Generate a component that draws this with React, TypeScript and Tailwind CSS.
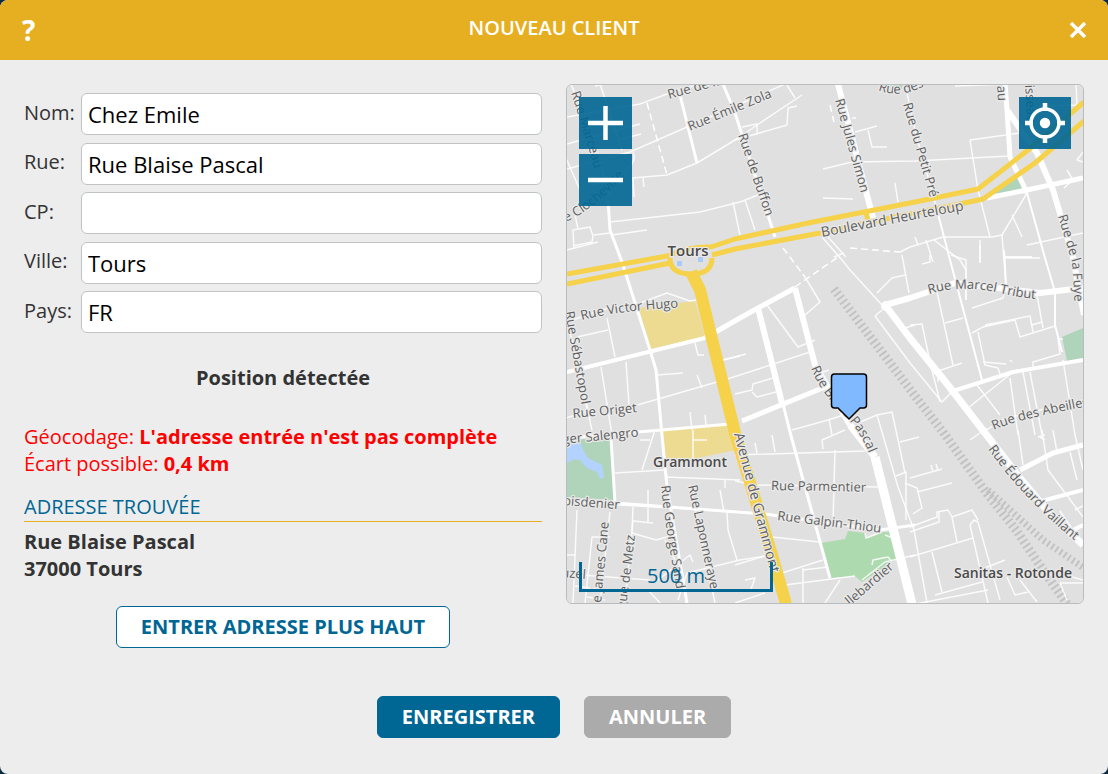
import { useState } from "react";

const fields = [
  { id: "nom", label: "Nom:", value: "Chez Emile" },
  { id: "rue", label: "Rue:", value: "Rue Blaise Pascal" },
  { id: "cp", label: "CP:", value: "" },
  { id: "ville", label: "Ville:", value: "Tours" },
  { id: "pays", label: "Pays:", value: "FR" },
];

const lanes = [
  "M567 169L630 152L687 127L740 104L785 84",
  "M567 117L640 104L667 94L700 84",
  "M571 84L590 130L610 195",
  "M600 84L622 150",
  "M567 144L640 124M590 186L622 176M618 140L641 134",
  "M595 86L625 80M566 158L580 190",
  "M633 152Q637 160 628 168L622 182M632 178L667 175L697 163L740 137L757 125L802 95",
  "M633 178L634 197M643 178L644 187",
  "M610 222L700 212L740 202L758 195M733 202L740 235M745 200L755 230",
  "M567 250L598 242M574 249L573 230L590 227L593 236L592 242L573 246M594 235L610 233M612 235L647 230M575 215L578 229",
  "M735 140L787 125L788 108L797 106M742 127L757 124L757 135M787 85L795 98",
  "M855 132L877 126M868 130L872 147L887 147M852 118L856 118",
  "M823 169L852 162L915 161L1010 156M823 198L853 199M895 183L898 202",
  "M970 140L1020 133M970 140L978 190L990 237M955 86L1010 84M1040 106L1077 105L1076 84",
  "M1027 193L1002 235L992 237L943 237L910 247L900 252M1002 235L1006 285M1027 245L1083 233M1012 215L1022 237M1005 258L1040 258M1067 170L1073 180L1064 188M1083 162L1077 160L1083 152",
  "M915 237L918 245M926 240L933 262M934 240L960 260L966 270L966 300",
  "M980 240L980 262M1005 257L1032 257M930 255L930 262L922 264",
  "M822 237L842 260L850 270L882 305M828 237L846 257M834 257L844 253",
  "M877 293L892 278L905 275M902 255L909 293",
  "M875 316L910 363L942 402L952 392M875 316L882 310M905 328L915 325",
  "M805 277L820 302L805 315M767 305L798 347L815 340M820 373L829 370",
  "M620 410L717 382L740 375L810 352M735 394L752 390L753 384L773 378M752 392L757 397L776 392M723 360L746 354",
  "M792 430L828 420L850 413M829 419L832 435M858 423L877 415L892 412L897 435L905 473M877 415L898 487L914 530L927 603",
  "M735 455L865 451M823 449L822 440L845 430M835 450L833 523M757 453L755 443M775 452L772 435",
  "M735 481L755 485L878 487M665 477L740 480M615 473L665 470M642 470L655 430M640 440L650 440M725 480L725 488",
  "M772 537L820 542M782 573L823 560M803 568L803 603M803 570L828 567M825 603L840 580M785 585L855 576M735 565L765 556",
  "M862 580L885 562L915 555M872 565L873 560L888 557L892 562M865 533L866 538L882 532",
  "M567 502L740 512L765 514M648 490L648 523M633 507L632 533L656 540L670 536M633 521L653 523M665 540L675 560",
  "M577 510L573 603M567 555L575 555M610 537L592 537L585 603M687 573L740 560L765 556M687 573L678 600M658 580L690 555L693 562M727 512L728 530L737 560M720 490L724 512",
  "M567 574L650 580M575 586L590 588M587 597L605 600M735 603L765 593M745 580L755 578L750 592",
  "M898 540L885 535M910 527L937 517L937 512L948 510L952 517L972 510L978 520M910 532L939 522L939 512M952 517L957 542M970 525L988 603M978 522L1000 600M970 525L974 520L978 522M910 557L973 538M932 552L942 592M935 595L982 582M910 605L988 590M980 570L1005 560",
  "M917 492L952 483M905 483L917 488L922 508L913 514M910 478L942 469M931 465L933 472M936 464L938 471M900 442L919 437M896 476L906 472L906 520",
  "M1042 430L1048 470L1083 517M1018 430L1023 465M1053 430L1057 452M1070 452L1077 480M1060 511L1073 530L1083 525M1075 510L1083 506M1038 437L1045 435",
  "M1007 577L1015 595L1028 592M1020 580L1037 602M1060 583L1083 583M1060 583L1067 600M1083 580L1065 575",
  "M937 292L953 365M935 372L962 363M945 323L963 318M910 325L922 324L930 362L940 402M972 308L1003 298L1006 285M951 255L966 260L966 300",
  "M972 333L983 327L1015 320L1020 337L1055 326M985 325L1030 316L1033 332M1032 325L1042 322M1037 295L1043 328M978 332L985 365L998 368L1000 374M983 362L1006 364M1033 367L1033 362L1060 354L1058 339L1063 339M1010 360L1012 362M1005 257L1032 257M980 245L980 263",
  "M1013 372L968 408M977 385L1000 415M1010 378L1018 435M1023 372L1035 435M1030 372L1042 435M1063 360L1075 435L1083 470M938 370L938 382",
  "M987 430L1000 420L1040 410L1083 400M970 440L987 428",
  "M567 322L600 310L640 303L667 293L690 301L697 300M577 337L608 330M607 318L615 357M601 367L612 435M626 362L629 405M657 375L683 373M695 343L698 355L704 355M697 375L702 388M723 360L740 356",
  "M690 412L692 430M705 415L706 425M693 430L693 459M692 440L707 440M566 418L590 410M585 400L592 430",
  "M610 512L600 603M633 520L625 603M690 485L715 603M648 590L660 603",
  "M1045 440L1040 437M905 84L915 130L937 210M560 300L575 350L590 420",
];

const streets = [
  { w: 3, d: "M567 372L705 338M608 200L610 230L622 262L650 350L656 370L662 435L667 487L687 603" },
  { w: 3, d: "M723 84L735 113L775 237M680 95L697 163" },
  { w: 3, d: "M567 438L612 434L662 430L730 424M611 438L615 503M615 503L765 514L880 530L915 525" },
  { w: 2, d: "M1027 193L1045 258L1055 292L1055 325L1062 352M937 210L950 260L982 380M1006 285L1004 250" },
  { w: 4, d: "M567 372L705 338M758 308L782 403M950 392L1013 372L1083 360M1038 502L1083 490M1073 530L1083 525" },
  { w: 3, d: "M782 400L790 432L830 578" },
  { w: 5, d: "M705 338L740 318L758 308L795 288M742 421L825 387M1005 84L1007 110L1010 157L1027 193M987 198L1027 190L1083 178M1020 470L1053 453L1083 445" },
  { w: 6, d: "M838 84L873 218M795 288L815 365L850 425M758 308L782 403M885 305L910 298L955 283L1040 293L1083 288M1007 110L1037 153L1053 190L1073 257L1084 315" },
  { w: 7, d: "M885 305L910 338L948 385L985 433L1020 478L1045 508L1083 545M850 425L875 457" },
  { w: 9, d: "M875 457L912 604" },
];

type StreetLabel = { text: string; d: string; large?: boolean };

const streetLabels: StreetLabel[] = [
  { text: "Rue Marceau", d: "M571 93Q580 120 595 170" },
  { text: "Rue de la", d: "M669 99L730 82" },
  { text: "Rue Émile Zola", d: "M690 131L775 96" },
  { text: "e Clocheville", d: "M566 222Q600 206 632 166" },
  { text: "Rue de Buffon", d: "M738 135L772 235" },
  { text: "Rue Jules Simon", d: "M835 100L867 215" },
  { text: "Rue des", d: "M878 90Q900 99 924 86" },
  { text: "Rue du Petit Pré", d: "M903 104L935 215" },
  { text: "au", d: "M997 86L999 120" },
  { text: "isseau", d: "M1025 85L1028 130" },
  { text: "Boulevard Heurteloup", d: "M822 237L975 208", large: true },
  { text: "Rue de la Fuye", d: "M1058 216L1072 262L1076 325" },
  { text: "Rue Marcel Tribut", d: "M929 294Q962 284 1000 293T1060 298" },
  { text: "Rue Victor Hugo", d: "M582 320Q620 310 690 307" },
  { text: "Rue Sébastopol", d: "M565 312L583 412" },
  { text: "Rue Origet", d: "M573 418L650 411" },
  { text: "ger Salengro", d: "M563 444L655 435" },
  { text: "oisdenier", d: "M563 505L630 510" },
  { text: "Rue Blaise Pascal", d: "M811 368Q820 392 843 414T874 470" },
  { text: "Avenue de Grammont", d: "M734 434L775 590", large: true },
  { text: "Rue Laponneraye", d: "M688 486L714 605" },
  { text: "Rue George Sand", d: "M661 486Q665 525 680 610" },
  { text: "Rue Parmentier", d: "M771 490L880 492" },
  { text: "Rue Galpin-Thiou", d: "M777 520L900 535" },
  { text: "Rue des Abeilles", d: "M994 430Q1020 418 1100 404" },
  { text: "Rue Édouard Vaillant", d: "M988 449Q1030 508 1092 554" },
  { text: "e James Cane", d: "M601 603L610 510" },
  { text: "gue de Metz", d: "M626 609L637 520" },
  { text: "uzel", d: "M561 577L600 580" },
  { text: "llebardier", d: "M850 606L900 563" },
];

const placeLabels = [
  { text: "Tours", x: 688, y: 256, className: "text-[15px] font-semibold" },
  { text: "Grammont", x: 690, y: 467, className: "text-sm font-semibold" },
  { text: "Sanitas - Rotonde", x: 1013, y: 578, className: "text-sm font-semibold" },
];

function MapDrawing() {
  return (
    <svg
      viewBox="567 85 516 518"
      preserveAspectRatio="xMidYMid slice"
      className="block h-full w-full bg-[#e0e0e0]"
      role="img"
      aria-label="Carte de Tours"
    >
      <g>
        <path fill="#eedb92" d="M639 308L687 302L695 301L705 337L650 349ZM662 430L729 425L736 450L693 459L665 460Z" />
        <path fill="#afd4b9" d="M567 440L612 438L615 500L567 497ZM1062 337L1083 328V359L1067 361ZM993 195L1018 177L1023 188ZM886 84L903 84L901 89Z" />
        <path fill="#aedab0" d="M821 543L845 539L848 531L865 533L867 538L883 532L892 532L898 558L862 582L855 576L830 578Z" />
        <path fill="#b3d2ff" d="M567 445Q576 441 581 444Q584 455 590 459L602 465L604 477Q602 480 600 478L597 472L587 468L580 460Q574 458 567 463Z" />
      </g>
      <g fill="none" stroke="#c2c2c2" strokeWidth="9" strokeDasharray="2 3">
        <path d="M834 289L915 396L943 432L988 495L1016 530L1043 570L1067 604" />
        <path d="M988 490L1010 510L1043 540L1084 568" strokeWidth="7" />
      </g>
      <g fill="none" stroke="#fff" strokeLinejoin="round">
        <g strokeWidth="1.5" strokeOpacity="0.85">
          {lanes.map((d) => (
            <path key={d} d={d} />
          ))}
        </g>
        <path
          d="M647 103L667 175M783 248L805 277M795 287L838 257M850 248L900 252M830 105L834 122"
          strokeWidth="1.5"
          strokeDasharray="7 4"
        />
        {streets.map((s) => (
          <path key={s.d} d={s.d} strokeWidth={s.w} />
        ))}
      </g>
      <circle cx="886" cy="306" r="5" fill="#fff" />
      <g fill="none" strokeLinejoin="round" stroke="#f6d14a" strokeWidth="5">
        <path d="M691 272L700 290L735 433L772 555L786 604" strokeWidth="12" />
        <path d="M567 274L667 256Q690 246 711 247L735 239L808 223L915 202L978 189L1028 150L1084 102" />
        <path d="M567 284L670 263M712 255L735 249L820 233L870 222L955 205L983 199L1035 163L1084 121M866 211L868 222" />
        <path d="M670 258Q670 274 691 274T712 258" />
      </g>
      <path fill="#a9cbfa" d="M677 261h5v5h-5zM698 257h5v5h-5z" />
      <g
        className="font-['Open_Sans','Noto_Sans',sans-serif] text-[13px]"
        fill="#606060"
        stroke="#e9e9e9"
        strokeWidth="2.5"
        strokeLinejoin="round"
        paintOrder="stroke"
      >
        {streetLabels.map((label, i) => (
          <g key={label.text}>
            <path id={`street-${i}`} d={label.d} fill="none" stroke="none" />
            <text className={label.large ? "text-sm" : undefined}>
              <textPath href={`#street-${i}`}>{label.text}</textPath>
            </text>
          </g>
        ))}
        {placeLabels.map((p) => (
          <text key={p.text} x={p.x} y={p.y} textAnchor="middle" className={p.className} fill="#4b4b4b">
            {p.text}
          </text>
        ))}
      </g>
      <path
        d="M834.500 374H863.500Q866.500 374 866.500 377V405Q866.500 408 863.500 408H860L849 419L838 408H834.500Q831.500 408 831.500 405V377Q831.500 374 834.500 374Z"
        fill="#80b9ff"
        stroke="#000"
        strokeWidth="1.5"
      />
    </svg>
  );
}

function MapPanel() {
  return (
    <section className="relative h-[520px] overflow-hidden rounded-md border border-[#b9bcbe]">
      <MapDrawing />
      <div className="absolute top-3 left-3 flex flex-col gap-[5px]">
        <button
          type="button"
          aria-label="Zoom avant"
          className="flex h-13 w-[53px] items-center justify-center bg-[#006694]/90 text-white"
        >
          <svg viewBox="0 0 53 52" className="h-13 w-[53px]" stroke="currentColor" strokeWidth="4.5">
            <path d="M9 26H44M26.500 9V43" />
          </svg>
        </button>
        <button
          type="button"
          aria-label="Zoom arrière"
          className="flex h-13 w-[53px] items-center justify-center bg-[#006694]/90 text-white"
        >
          <svg viewBox="0 0 53 52" className="h-13 w-[53px]" stroke="currentColor" strokeWidth="4.5">
            <path d="M9 26H44" />
          </svg>
        </button>
      </div>
      <button
        type="button"
        aria-label="Centrer"
        className="absolute top-3 right-3 flex size-13 items-center justify-center bg-[#006694]/90 text-white"
      >
        <svg viewBox="0 0 52 52" className="size-13" fill="none" stroke="currentColor" strokeWidth="4.5">
          <circle cx="26" cy="26" r="14" strokeWidth="3.5" />
          <circle cx="26" cy="26" r="5.200" fill="currentColor" stroke="none" />
          <path d="M26 6V14M26 38V46M6 26H14M38 26H46" />
        </svg>
      </button>
      <div className="absolute bottom-[11px] left-3 flex h-[30px] w-[194px] items-end justify-center border-x-3 border-b-3 border-[#006694] text-xl leading-[26px] text-[#006694]">
        500 m
      </div>
    </section>
  );
}

export default function App() {
  const [values, setValues] = useState<Record<string, string>>(
    Object.fromEntries(fields.map((f) => [f.id, f.value])),
  );

  return (
    <div className="min-h-screen bg-[#0b2b40] font-['Open_Sans','Noto_Sans',sans-serif] text-[#333333]">
      <main className="flex min-h-screen flex-col overflow-hidden rounded-lg bg-[#ededed]">
        <header className="flex h-15 items-center justify-between bg-[#e6af22] px-[22px] text-white">
          <button type="button" aria-label="Aide" className="w-6 text-left text-[28px] leading-none font-bold">
            ?
          </button>
          <h1 className="pb-1 text-xl font-semibold">NOUVEAU CLIENT</h1>
          <button type="button" aria-label="Fermer" className="flex w-6 justify-end">
            <svg viewBox="0 0 16 16" className="size-4" stroke="currentColor" strokeWidth="3.5">
              <path d="M1 1L15 15M15 1L1 15" />
            </svg>
          </button>
        </header>

        <form className="px-6 pt-6" onSubmit={(e) => e.preventDefault()}>
          <div className="grid grid-cols-2 gap-6">
            <div className="flex flex-col pt-[9px]">
              <div className="flex h-60 flex-col justify-between">
                {fields.map((f) => (
                  <div key={f.id} className="flex h-[42px] items-center">
                    <label htmlFor={f.id} className="w-[57px] shrink-0 pb-[3px] text-xl">
                      {f.label}
                    </label>
                    <input
                      id={f.id}
                      value={values[f.id]}
                      onChange={(e) => setValues({ ...values, [f.id]: e.target.value })}
                      className="h-full w-full min-w-0 rounded-md border border-[#bfc3c6] bg-white px-1.5 text-[22px] text-black"
                    />
                  </div>
                ))}
              </div>
              <h2 className="mt-[31px] text-center text-xl leading-[27px] font-bold">Position détectée</h2>
              <p className="mt-8 text-xl leading-[27px] text-[#ff0000]">
                Géocodage: <strong>L'adresse entrée n'est pas complète</strong>
                <br />
                Écart possible: <strong>0,4 km</strong>
              </p>
              <h3 className="mt-4 border-b border-[#e6af22] text-xl leading-[28px] font-medium text-[#006694]">
                ADRESSE TROUVÉE
              </h3>
              <p className="mt-1.5 text-xl leading-[27px] font-bold">
                Rue Blaise Pascal
                <br />
                37000 Tours
              </p>
              <button
                type="button"
                className="mt-6 h-[42px] self-center rounded-md border border-[#006694] bg-white px-6 text-xl font-bold text-[#006694]"
              >
                ENTRER ADRESSE PLUS HAUT
              </button>
            </div>
            <MapPanel />
          </div>
          <div className="mt-12 flex justify-center gap-6">
            <button
              type="submit"
              className="h-[42px] rounded-md border border-[#006694] bg-[#006694] px-6 text-xl font-bold text-white"
            >
              ENREGISTRER
            </button>
            <button
              type="button"
              className="h-[42px] rounded-md border border-[#ababab] bg-[#ababab] px-6 text-xl font-bold text-white"
            >
              ANNULER
            </button>
          </div>
        </form>
      </main>
    </div>
  );
}
